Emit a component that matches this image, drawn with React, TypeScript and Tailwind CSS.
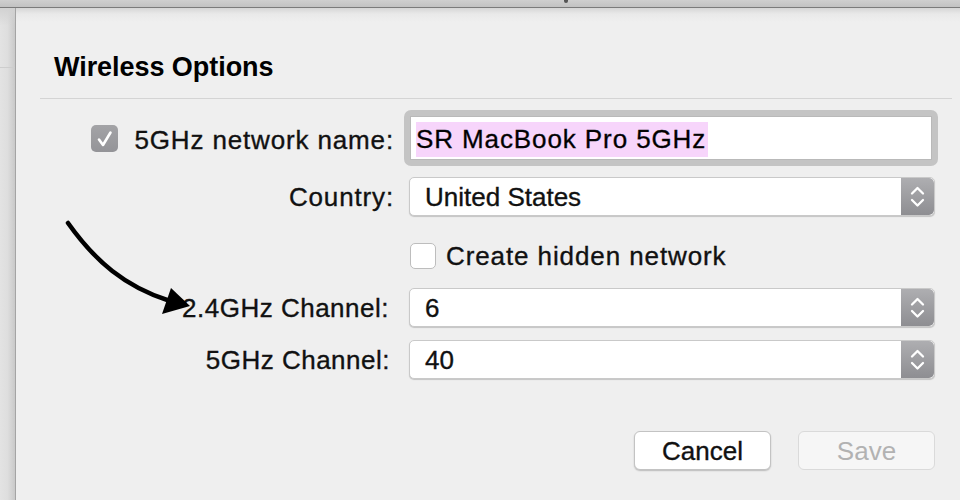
const font = { fontFamily: '"Liberation Sans", Arial, Helvetica, sans-serif' };

const txt = "text-[26px] leading-none text-[#111] [-webkit-text-stroke:0.35px_#111]";

function Stepper() {
  return (
    <div className="w-[33px] h-full rounded-r-[5px] bg-gradient-to-b from-[#aeaeb1] to-[#8e8e92] flex items-center justify-center">
      <svg width="33" height="39" viewBox="0 0 33 39" fill="none">
        <polyline
          points="11,16.5 16.5,11 22,16.5"
          stroke="white"
          strokeWidth="2.3"
          strokeLinecap="round"
          strokeLinejoin="round"
        />
        <polyline
          points="11,23 16.5,28.5 22,23"
          stroke="white"
          strokeWidth="2.3"
          strokeLinecap="round"
          strokeLinejoin="round"
        />
      </svg>
    </div>
  );
}

function Select({ value }: { value: string }) {
  return (
    <div className="w-[526px] h-[39px] flex bg-white rounded-[5px] border border-[#c9c9c9] shadow-[0_1px_1px_rgba(0,0,0,0.18)] overflow-hidden">
      <div className={`flex-1 flex items-center pl-[15px] ${txt}`}>{value}</div>
      <Stepper />
    </div>
  );
}

function FormRow({
  label,
  pr = "",
  children,
}: {
  label: React.ReactNode;
  pr?: string;
  children: React.ReactNode;
}) {
  return (
    <div className="flex items-center">
      <div className={`w-[378px] flex items-center justify-end ${txt} ${pr}`}>
        {label}
      </div>
      {children}
    </div>
  );
}

export default function App() {
  return (
    <div
      className="w-[960px] h-[500px] bg-[#efefef] flex flex-col overflow-hidden relative"
      style={font}
    >
      {/* window title bar edge */}
      <div className="h-[8px] shrink-0 bg-gradient-to-b from-[#cfcfcf] to-[#c2c2c2] border-b border-[#7b7b7b] flex">
        <div className="ml-[564px] w-[4px] h-[3px] rounded-b-full bg-[#555]" />
      </div>

      <div className="flex-1 flex">
        {/* left sidebar sliver */}
        <div className="w-[16px] shrink-0 flex flex-col bg-gradient-to-r from-[#e3e3e3] via-[#dedede] to-[#c9c9c9] border-r border-[#a4a4a4]">
          <div className="h-[60px] border-b border-[#cdcdcd] bg-gradient-to-b from-[#d2d2d2] to-transparent to-[30%]" />
        </div>

        {/* sheet */}
        <div className="flex-1 flex flex-col bg-[linear-gradient(to_bottom,#d6d6d6_0px,#e9e9e9_6px,#efefef_14px)]">
          <div className="pt-[46px] pl-[38px] h-[73px] flex items-end">
            <div className="text-[27px] leading-[27px] font-bold text-black tracking-[-0.05px]">
              Wireless Options
            </div>
          </div>

          <div className="mt-[17px] ml-[24px] mr-[8px] h-[1px] bg-[#d4d4d4]" />

          {/* network name */}
          <div className="mt-[11px]">
            <FormRow
              label={
                <>
                  <div className="w-[27px] h-[27px] rounded-[5px] bg-gradient-to-b from-[#a3a3a6] to-[#949498] flex items-center justify-center mr-[16px]">
                    <svg width="27" height="27" viewBox="0 0 27 27" fill="none">
                      <polyline
                        points="8,14.5 12,20 19.5,7.5"
                        stroke="white"
                        strokeWidth="2.6"
                        strokeLinecap="round"
                        strokeLinejoin="round"
                      />
                    </svg>
                  </div>
                  <span className="tracking-[0.85px] pt-[3px]">5GHz network name:</span>
                </>
              }
            >
              <div className="ml-[10px] w-[534px] h-[56px] rounded-[7px] bg-[#c4c4c4] p-[6px]">
                <div className="h-full bg-white border border-[#b9b9b9] flex items-center pl-[5px] pt-[2px]">
                  <span
                    className={`bg-[#f7d5fb] h-[35px] flex items-center pr-[2px] tracking-[0.9px] ${txt} text-black`}
                  >
                    SR MacBook Pro 5GHz
                  </span>
                </div>
              </div>
            </FormRow>
          </div>

          {/* country */}
          <div className="mt-[11px]">
            <FormRow label={<span className="tracking-[0.85px]">Country:</span>}>
              <div className="ml-[15px]">
                <Select value="United States" />
              </div>
            </FormRow>
          </div>

          {/* hidden network */}
          <div className="mt-[26px] ml-[394px] flex items-center h-[27px]">
            <div className="w-[26px] h-[26px] rounded-[5px] bg-white border border-[#bdbdbd]" />
            <span className={`ml-[10px] tracking-[0.9px] ${txt}`}>Create hidden network</span>
          </div>

          {/* 2.4GHz channel */}
          <div className="mt-[19px]">
            <FormRow label={<span className="tracking-[0.5px]">2.4GHz Channel:</span>} pr="pr-[5px]">
              <div className="ml-[15px]">
                <Select value="6" />
              </div>
            </FormRow>
          </div>

          {/* 5GHz channel */}
          <div className="mt-[13px]">
            <FormRow label={<span className="tracking-[0.5px]">5GHz Channel:</span>} pr="pr-[4px]">
              <div className="ml-[15px]">
                <Select value="40" />
              </div>
            </FormRow>
          </div>

          {/* buttons */}
          <div className="mt-[52px] flex justify-end gap-[27px] pr-[25px]">
            <button
              className={`w-[137px] h-[39px] rounded-[6px] bg-white border border-[#c3c3c3] shadow-[0_1px_1.5px_rgba(0,0,0,0.22)] ${txt}`}
            >
              Cancel
            </button>
            <button className="w-[137px] h-[39px] rounded-[6px] bg-[#f6f6f6] border border-[#dadada] text-[26px] leading-none text-[#b2b2b2]">
              Save
            </button>
          </div>
        </div>
      </div>

      {/* annotation arrow */}
      <svg
        className="absolute left-0 top-0 pointer-events-none"
        width="960"
        height="500"
        viewBox="0 0 960 500"
      >
        <path
          d="M68 223 C 95 261, 125 287, 170 301"
          stroke="black"
          strokeWidth="4.5"
          fill="none"
          strokeLinecap="round"
        />
        <polygon points="162,314 171,288 190,306" fill="black" />
      </svg>
    </div>
  );
}
